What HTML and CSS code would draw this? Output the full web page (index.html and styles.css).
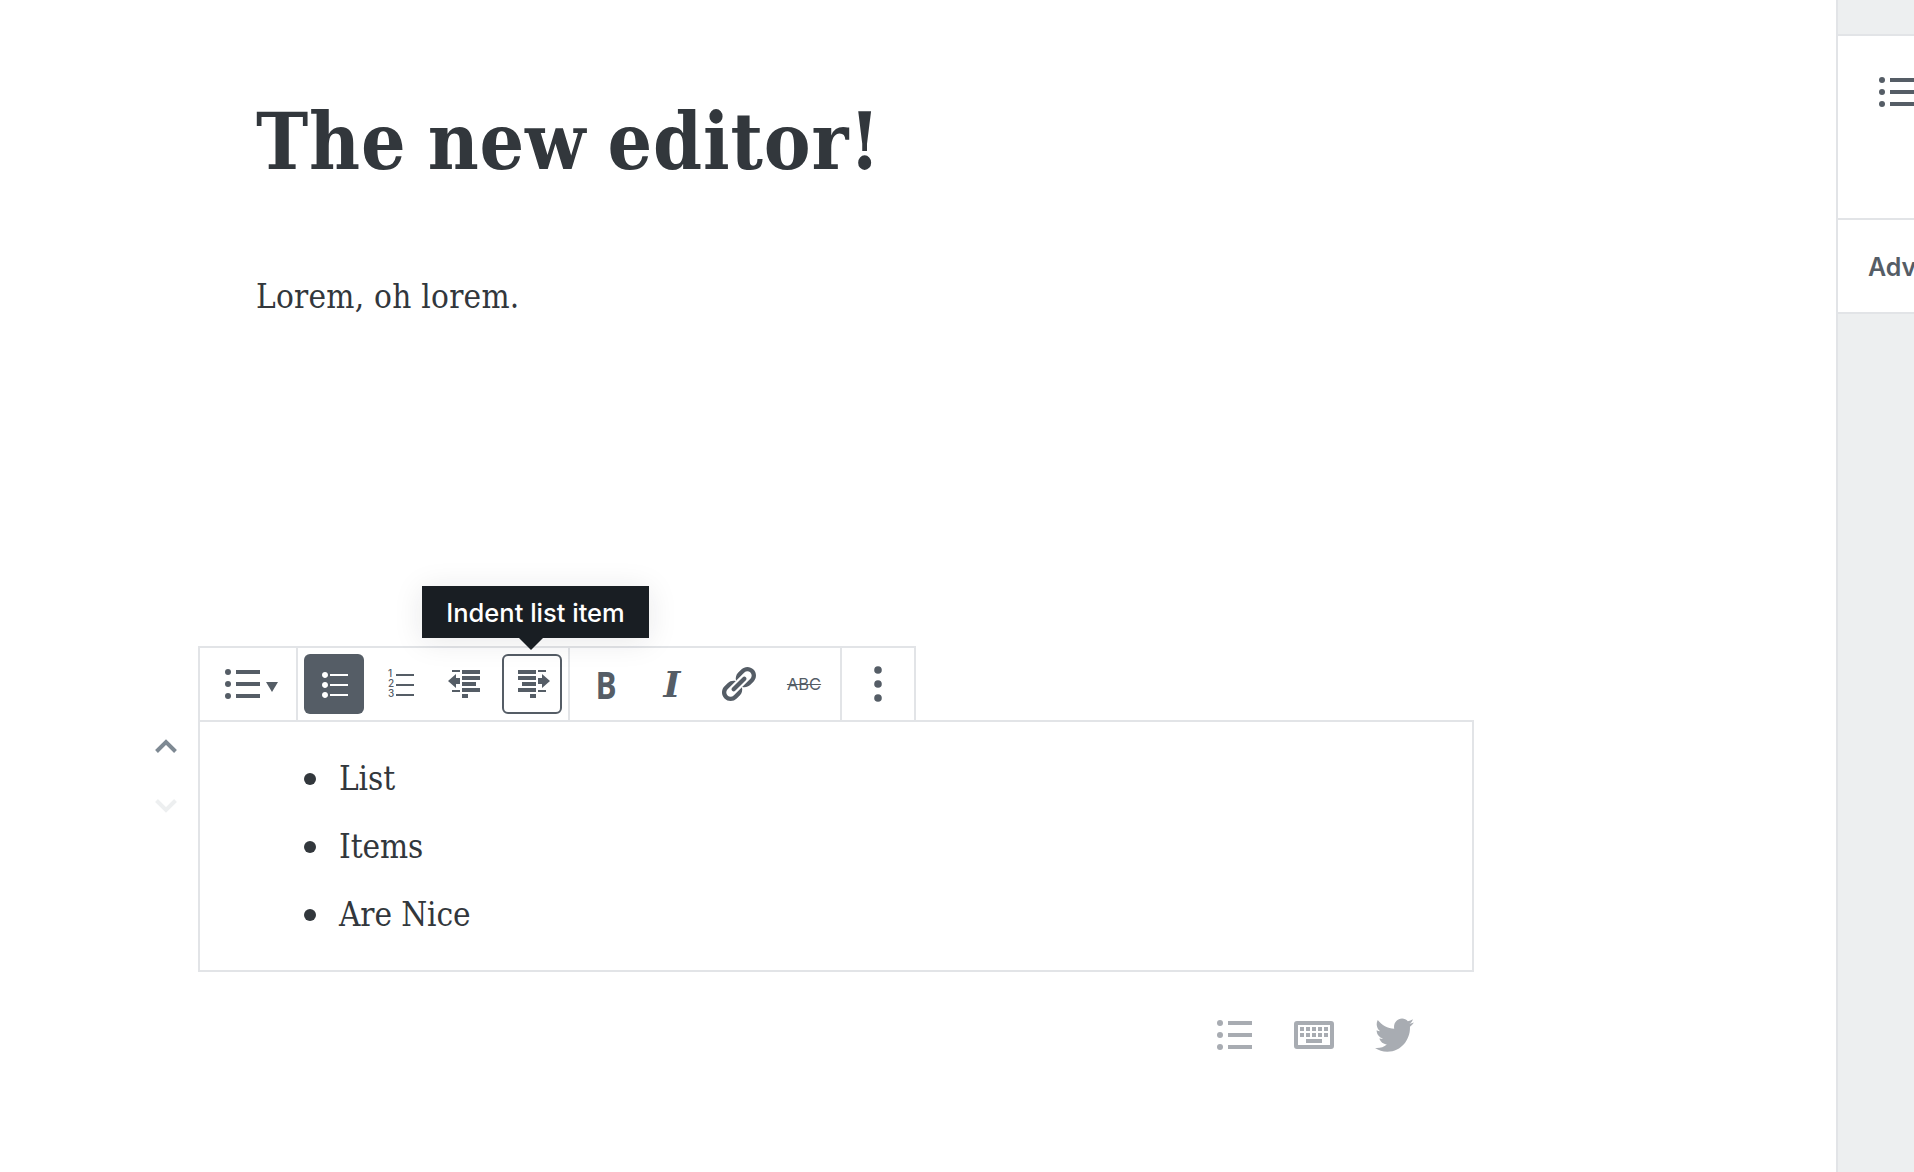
FILE: index.html
```html
<!DOCTYPE html>
<html lang="en">
<head>
<meta charset="utf-8">
<title>The new editor!</title>
<link rel="stylesheet" href="styles.css">
</head>
<body>
<div class="app">
  <main class="editor">
    <h1 class="post-title">The new editor!</h1>
    <p class="para">Lorem, oh lorem.</p>
    <section class="block">
      <div class="movers">
        <svg class="chev chev-up" viewBox="0 0 22 14"><path d="M1.500 12.500 11 3l9.500 9.500" fill="none" stroke="currentColor" stroke-width="4"/></svg>
        <svg class="chev chev-down" viewBox="0 0 22 14"><path d="M1.500 1.500 11 11l9.500-9.500" fill="none" stroke="currentColor" stroke-width="4"/></svg>
      </div>
      <div class="toolbar">
        <div class="group group-switch">
          <svg class="ic-switch" viewBox="0 0 35 30"><g fill="currentColor"><circle cx="3" cy="3" r="3"/><circle cx="3" cy="15" r="3"/><circle cx="3" cy="27" r="3"/><rect x="11" y="1" width="24" height="4"/><rect x="11" y="13" width="24" height="4"/><rect x="11" y="25" width="24" height="4"/></g></svg>
          <svg class="ic-caret" viewBox="0 0 12 10"><path d="M0 0h12L6 10z" fill="currentColor"/></svg>
        </div>
        <div class="group group-main">
          <button class="btn btn-active"><svg class="ic" viewBox="0 0 20 20"><path fill="currentColor" d="M5.500 7C4.670 7 4 6.330 4 5.500 4 4.660 4.670 4 5.500 4 6.340 4 7 4.660 7 5.500 7 6.330 6.340 7 5.500 7zM8 5h9v1H8V5zm-2.500 7c-.83 0-1.500-.67-1.500-1.500C4 9.660 4.670 9 5.500 9c.84 0 1.500.66 1.500 1.500 0 .83-.66 1.500-1.500 1.500zM8 10h9v1H8v-1zm-2.500 7c-.83 0-1.500-.67-1.500-1.500 0-.84.67-1.500 1.500-1.500.84 0 1.500.66 1.500 1.500 0 .83-.66 1.500-1.500 1.500zM8 15h9v1H8v-1z"/></svg></button>
          <button class="btn"><svg class="ic" viewBox="0 0 40 40"><g fill="currentColor"><text class="ol-num" x="8" y="13">1</text><text class="ol-num" x="8" y="23">2</text><text class="ol-num" x="8" y="33">3</text><rect x="16" y="10" width="18" height="2"/><rect x="16" y="20" width="18" height="2"/><rect x="16" y="30" width="18" height="2"/></g></svg></button>
          <button class="btn"><svg class="ic" viewBox="0 0 20 20"><path fill="currentColor" d="M7 4V3H3v1h4zm10 1V3H8v2h9zM7 7H5V5L1 8.500 5 12v-2h2V7zm10 1V6H8v2h9zm-2 3V9H8v2h7zm2 3v-2H8v2h9zM7 14v-1H3v1h4zm4 3v-2H8v2h3z"/></svg></button>
          <button class="btn btn-focus"><svg class="ic" viewBox="0 0 20 20"><path fill="currentColor" d="M3 5V3h9v2H3zm10-1V3h4v1h-4zm0 3h2V5l4 3.500-4 3.500v-2h-2V7zM3 8V6h9v2H3zm2 3V9h7v2H5zm-2 3v-2h9v2H3zm10 0v-1h4v1h-4zm-4 3v-2h3v2H9z"/></svg></button>
          <span class="tooltip">Indent list item</span>
        </div>
        <div class="group group-main group-format">
          <button class="btn txt-b">B</button>
          <button class="btn txt-i">I</button>
          <button class="btn"><svg class="ic" viewBox="0 0 20 20"><path fill="currentColor" d="M17.740 2.760c1.680 1.690 1.680 4.410 0 6.100l-1.530 1.520c-1.120 1.120-2.700 1.470-4.140 1.090l2.620-2.610.76-.77.76-.76c.84-.84.84-2.200 0-3.040-.84-.85-2.200-.85-3.040 0l-.77.76-3.380 3.380c-.37-1.440-.02-3.020 1.100-4.140l1.520-1.530c1.690-1.680 4.420-1.680 6.100 0zM8.590 13.430l5.340-5.340c.42-.42.42-1.100 0-1.520-.44-.43-1.130-.39-1.530 0l-5.330 5.340c-.42.42-.42 1.100 0 1.520.44.43 1.130.39 1.520 0zm-.76 2.290l4.140-4.150c.38 1.440.03 3.020-1.090 4.140l-1.520 1.530c-1.690 1.680-4.410 1.680-6.100 0-1.680-1.680-1.680-4.420 0-6.100l1.530-1.520c1.120-1.120 2.700-1.470 4.140-1.100l-4.140 4.150c-.85.84-.85 2.200 0 3.050.84.84 2.200.84 3.040 0z"/></svg></button>
          <button class="btn txt-s">ABC</button>
        </div>
        <div class="group group-more">
          <svg class="ic-more" viewBox="0 0 8 36"><g fill="currentColor"><circle cx="4" cy="4" r="3.800"/><circle cx="4" cy="18" r="3.800"/><circle cx="4" cy="32" r="3.800"/></g></svg>
        </div>
      </div>
      <ul class="list">
        <li>List</li>
        <li>Items</li>
        <li>Are Nice</li>
      </ul>
      <div class="shortcuts">
        <svg class="sc sc-list" viewBox="0 0 35 30"><g fill="currentColor"><circle cx="3" cy="3" r="3"/><circle cx="3" cy="15" r="3"/><circle cx="3" cy="27" r="3"/><rect x="11" y="1" width="24" height="4"/><rect x="11" y="13" width="24" height="4"/><rect x="11" y="25" width="24" height="4"/></g></svg>
        <svg class="sc sc-kb" viewBox="0 0 40 28"><path fill="currentColor" fill-rule="evenodd" d="M3 0h34a3 3 0 0 1 3 3v22a3 3 0 0 1-3 3H3a3 3 0 0 1-3-3V3a3 3 0 0 1 3-3zm1 4v20h32V4zM6 6h4v4H6zm6 0h4v4h-4zm6 0h4v4h-4zm6 0h4v4h-4zm6 0h4v4h-4zM6 12h4v4H6zm6 0h4v4h-4zm6 0h4v4h-4zm6 0h4v4h-4zm6 0h4v4h-4zM12 18h16v4H12z"/></svg>
        <svg class="sc sc-tw" viewBox="1.220 2.500 17.730 14.800" preserveAspectRatio="none"><path fill="currentColor" d="M18.940 4.460c-.49.730-1.110 1.380-1.830 1.900.01.150.01.310.01.470 0 4.790-3.650 10.320-10.320 10.320-2.050 0-3.960-.6-5.560-1.640.28.030.57.050.87.050 1.700 0 3.260-.58 4.500-1.560-1.590-.03-2.930-1.080-3.390-2.530.22.040.45.070.68.070.33 0 .65-.04.96-.13-1.660-.33-2.910-1.800-2.910-3.560v-.04c.49.270 1.050.43 1.640.45-.97-.65-1.610-1.760-1.610-3.020 0-.66.18-1.280.5-1.820 1.790 2.200 4.470 3.650 7.490 3.800-.06-.27-.1-.55-.1-.83 0-2 1.630-3.630 3.630-3.630 1.040 0 1.980.44 2.650 1.150.83-.16 1.600-.46 2.300-.88-.27.850-.85 1.570-1.600 2.020.74-.09 1.440-.29 2.090-.58z"/></svg>
      </div>
    </section>
  </main>
  <aside class="sidebar">
    <div class="side-top"></div>
    <div class="side-panel">
      <svg class="side-ic" viewBox="0 0 35 30"><g fill="currentColor"><circle cx="3" cy="3" r="3"/><circle cx="3" cy="15" r="3"/><circle cx="3" cy="27" r="3"/><rect x="11" y="1" width="24" height="4"/><rect x="11" y="13" width="24" height="4"/><rect x="11" y="25" width="24" height="4"/></g></svg>
    </div>
    <div class="side-adv">Advanced</div>
  </aside>
</div>
</body>
</html>
```

FILE: styles.css
```css
* { box-sizing: border-box; }
html, body { margin: 0; height: 100%; overflow: hidden; background: #fff; }
body { font-family: "DejaVu Serif Condensed", "DejaVu Serif", serif; color: #32373c; }
.app { display: flex; width: 1914px; height: 1172px; overflow: hidden; }
.editor { flex: 0 0 1836px; }

.post-title { margin: 0; padding: 94px 0 0 256px; font-size: 78px; line-height: 96px; font-weight: 700; letter-spacing: .85px; word-spacing: -4px; color: #32373c; }
.para { margin: 0; padding: 82px 0 0 256px; font-size: 33px; line-height: 50px; letter-spacing: .25px; color: #32373c; }

.block { position: relative; width: 1276px; margin: 324px 0 0 198px; }
.movers { position: absolute; left: -43px; top: 93px; display: flex; flex-direction: column; gap: 46px; }
.chev { display: block; width: 22px; height: 14px; }
.chev-up { color: #7e8993; }
.chev-down { color: #edeff0; }

.toolbar { display: inline-flex; height: 76px; border: 2px solid #e2e4e7; vertical-align: top; }
.group { display: flex; align-items: center; border-right: 2px solid #e2e4e7; color: #555d66; }
.group:last-child { border-right: 0; }
.group-switch { width: 98px; padding-left: 25px; gap: 6px; }
.ic-switch { width: 35px; height: 30px; }
.ic-caret { width: 12px; height: 10px; margin-top: 6px; }
.group-main { position: relative; gap: 6px; padding: 0 6px; }
.group-more { width: 72px; justify-content: center; }
.ic-more { width: 8px; height: 36px; }

.btn { display: flex; align-items: center; justify-content: center; width: 60px; height: 60px; padding: 0; border: 0; border-radius: 6px; background: transparent; color: #555d66; }
.btn-active { background: #555d66; color: #fff; }
.btn-focus { border: 2px solid #555d66; }
.ic { flex: none; width: 40px; height: 40px; }
.ol-num { font-family: "Inter", sans-serif; font-size: 10px; font-weight: 500; }
.txt-b { font-family: "Open Sans", sans-serif; font-weight: 700; font-size: 37px; transform: scaleX(.85); }
.txt-i { font-family: "DejaVu Serif", serif; font-weight: 700; font-style: italic; font-size: 36px; }
.txt-s { font-family: "Inter", sans-serif; font-size: 16.500px; text-decoration: line-through; }

.tooltip { position: absolute; left: 124px; top: -62px; display: block; width: 227px; height: 52px; background: #191e23; color: #fff; font-family: "Inter", sans-serif; font-size: 25.500px; font-weight: 500; line-height: 54px; text-align: center; box-shadow: 0 3px 30px rgba(25, 30, 35, .1); white-space: nowrap; }
.tooltip::after { content: ""; position: absolute; left: 97px; top: 52px; border: 12px solid transparent; border-top-color: #191e23; border-bottom: 0; }

.list { margin: -2px 0 0; height: 252px; border: 2px solid #e2e4e7; padding: 23px 0 0 111px; list-style: none; font-size: 33px; line-height: 68px; letter-spacing: -.1px; }
.list li { position: relative; padding-left: 28px; }
.list li::before { content: ""; position: absolute; left: -7px; top: 28px; width: 12px; height: 12px; border-radius: 50%; background: #32373c; }

.shortcuts { display: flex; align-items: center; justify-content: flex-end; gap: 41px; padding: 46px 60px 0 0; color: #a8acb2; }
.sc { display: block; }
.sc-list { width: 35px; height: 30px; margin-right: 1px; }
.sc-kb { width: 40px; height: 28px; }
.sc-tw { width: 39px; height: 34px; }

.sidebar { flex: 0 0 78px; background: #edeff0; border-left: 2px solid #e2e4e7; overflow: hidden; }
.side-top { height: 36px; border-bottom: 2px solid #e2e4e7; }
.side-panel { height: 184px; background: #fff; padding: 41px 0 0 41px; border-bottom: 2px solid #e2e4e7; overflow: hidden; }
.side-ic { display: block; width: 35px; height: 30px; color: #555d66; }
.side-adv { height: 94px; padding-left: 30px; background: #fff; border-bottom: 2px solid #e2e4e7; font-family: "Inter", sans-serif; font-weight: 600; font-size: 25px; line-height: 94px; color: #555d66; white-space: nowrap; overflow: hidden; }
```
